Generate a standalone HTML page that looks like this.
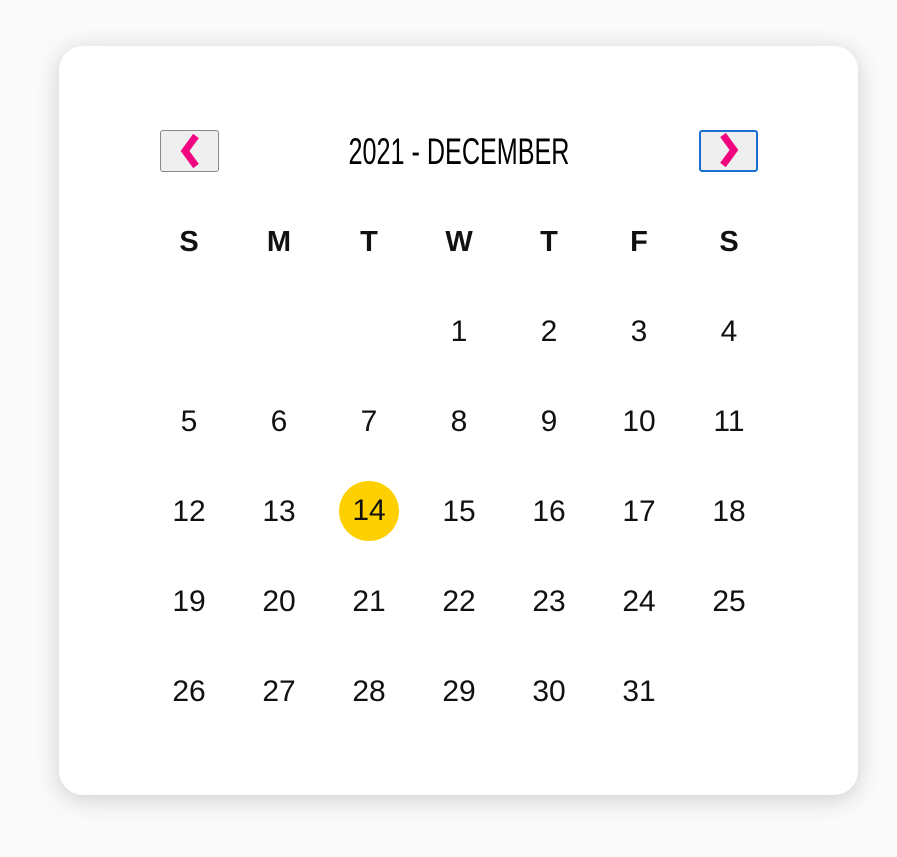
<!DOCTYPE html><html><head><style>
body{margin:0;width:897px;height:857px;background:#fafafa;font-family:"Liberation Sans",Arial,sans-serif;position:relative;overflow:hidden}
.card{position:absolute;left:59px;top:46px;width:799px;height:749px;background:#fff;border-radius:24px;box-shadow:0 4px 24px rgba(0,0,0,.18)}
.btn{position:absolute;top:130px;width:59px;height:42px;background:#efefef;border:1px solid #888;border-radius:3px;box-sizing:border-box}
.title{position:absolute;left:259px;width:400px;top:130px;text-align:center;font-family:"Liberation Sans Narrow","Liberation Sans",sans-serif;font-size:37px;line-height:44px;transform:scaleX(.68);color:#000}
.c{position:absolute;width:60px;height:60px;margin-left:-30px;margin-top:-29px;line-height:60px;text-align:center;font-size:30px;color:#111}
.h{font-weight:bold;font-size:29px}
.sel{background:#ffd000;border-radius:50%;margin-top:-30px}
</style></head><body>
<div class="card"></div>
<div class="btn" style="left:160px"><svg width="58" height="41" viewBox="0 0 58 41"><path d="M35 5 L24 20 L35 35" fill="none" stroke="#f0047f" stroke-width="7"/></svg></div>
<div class="btn" style="left:699px;border:2px solid #1a6fd6"><svg width="55" height="38" viewBox="0 0 55 38"><path d="M22 3 L33 18 L22 33" fill="none" stroke="#f0047f" stroke-width="7"/></svg></div>
<div class="title">2021 - DECEMBER</div>
<div id="g"></div>
<script>
var g=document.getElementById('g'),h="SMTWTFS",s="";
for(var i=0;i<7;i++)s+='<div class="c h" style="left:'+(189+i*90)+'px;top:241px">'+h[i]+'</div>';
for(var d=1;d<=31;d++){var p=d+2,col=p%7,row=Math.floor(p/7);
s+='<div class="c'+(d==14?' sel':'')+'" style="left:'+(189+col*90)+'px;top:'+(331+row*90)+'px">'+d+'</div>';}
g.innerHTML=s;
</script>
</body></html>
